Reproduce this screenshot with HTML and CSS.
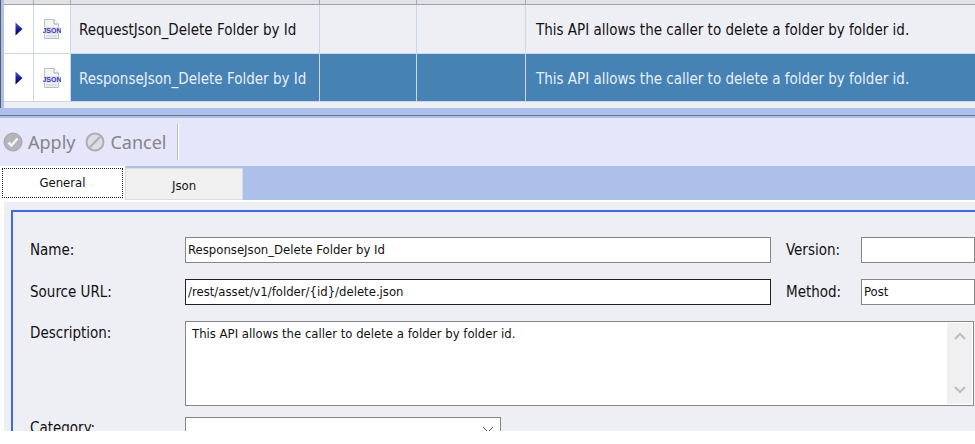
FILE: index.html
```html
<!DOCTYPE html>
<html lang="en">
<head>
  <meta charset="UTF-8">
  <title>Assets</title>
  <link rel="stylesheet" href="styles.css">
</head>
<body>
  <svg width="0" height="0" class="defs" aria-hidden="true">
    <defs>
      <linearGradient id="arrowFill" x1="0" y1="0" x2="0" y2="1">
        <stop offset="0" stop-color="#5a5ad8"/>
        <stop offset="0.5" stop-color="#1c1c9c"/>
        <stop offset="1" stop-color="#00002c"/>
      </linearGradient>
      <symbol id="arrow" viewBox="0 0 8 14">
        <path d="M0.5 0.5 L7.5 7 L0.5 13.5 Z" fill="url(#arrowFill)"/>
      </symbol>
      <symbol id="json" viewBox="0 0 18 20">
        <path d="M1.5 0.5 H11 L15.5 5 V19.5 H1.5 Z" fill="#f3f5f6" stroke="#b9c0c4"/>
        <path d="M11 0.5 V5 H15.5" fill="#fff" stroke="#a4aaae"/>
        <path d="M3 16.5 H14 M3 18 H14" stroke="#d3dadd"/>
        <rect x="1" y="8" width="16" height="7" fill="#dfe1f2"/>
        <text x="9" y="14" font-size="7" font-weight="bold" text-anchor="middle" fill="#3c3ca8" font-family="Liberation Sans, sans-serif">JSON</text>
      </symbol>
    </defs>
  </svg>

  <main class="window">
    <div class="grid-area">
      <table class="assets">
        <colgroup>
          <col class="col-arrow">
          <col class="col-icon">
          <col class="col-name">
          <col class="col-a">
          <col class="col-b">
          <col>
        </colgroup>
        <thead>
          <tr><th></th><th></th><th></th><th></th><th></th><th></th></tr>
        </thead>
        <tbody>
          <tr>
            <td class="mark"><svg class="arrow"><use href="#arrow"/></svg></td>
            <td class="mark"><svg class="json"><use href="#json"/></svg></td>
            <td>RequestJson_Delete Folder by Id</td>
            <td></td>
            <td></td>
            <td>This API allows the caller to delete a folder by folder id.</td>
          </tr>
          <tr class="selected">
            <td class="mark"><svg class="arrow"><use href="#arrow"/></svg></td>
            <td class="mark"><svg class="json"><use href="#json"/></svg></td>
            <td>ResponseJson_Delete Folder by Id</td>
            <td></td>
            <td></td>
            <td>This API allows the caller to delete a folder by folder id.</td>
          </tr>
        </tbody>
      </table>
    </div>
    <div class="splitter"></div>

    <div class="toolbar">
      <button type="button" disabled>
        <svg viewBox="0 0 20 20"><circle cx="10" cy="10" r="9" fill="#b5b5b9" stroke="#a3a3a7"/><path d="M5.5 10.5 L8.5 13.5 L14.5 6.5" fill="none" stroke="#f4f4f8" stroke-width="2.5"/></svg>
        Apply
      </button>
      <button type="button" disabled>
        <svg viewBox="0 0 20 20"><circle cx="10" cy="10" r="8.5" fill="#dcdce4" stroke="#adadb1" stroke-width="2"/><path d="M5 15 L15 5" stroke="#adadb1" stroke-width="2"/></svg>
        Cancel
      </button>
      <span class="divider"></span>
    </div>

    <div class="tabs" role="tablist">
      <button type="button" role="tab" aria-selected="true" class="tab active">General</button>
      <button type="button" role="tab" aria-selected="false" class="tab">Json</button>
    </div>

    <div class="panel">
      <form class="details">
        <div class="row">
          <label for="name">Name:</label>
          <input type="text" id="name" value="ResponseJson_Delete Folder by Id">
          <label for="version">Version:</label>
          <input type="text" id="version">
        </div>
        <div class="row">
          <label for="url">Source URL:</label>
          <input type="text" id="url" class="focused" value="/rest/asset/v1/folder/{id}/delete.json">
          <label for="method">Method:</label>
          <input type="text" id="method" value="Post">
        </div>
        <div class="row description">
          <label for="description">Description:</label>
          <div class="memo">
            <textarea id="description">This API allows the caller to delete a folder by folder id.</textarea>
            <div class="scroll">
              <button type="button" aria-label="Scroll up"><svg viewBox="0 0 12 10"><path d="M1 8 L6 3 L11 8"/></svg></button>
              <button type="button" aria-label="Scroll down"><svg viewBox="0 0 12 10"><path d="M1 2 L6 7 L11 2"/></svg></button>
            </div>
          </div>
        </div>
        <div class="row">
          <label for="category">Category:</label>
          <div class="combo">
            <select id="category"><option></option></select>
            <svg viewBox="0 0 12 8"><path d="M1 1 L6 6 L11 1"/></svg>
          </div>
        </div>
      </form>
    </div>
  </main>
</body>
</html>
```
FILE: styles.css
```css
* {
  box-sizing: border-box;
}

body {
  margin: 0;
  background-color: #fff;
  color: #111;
  font-family: Tahoma, "DejaVu Sans Condensed", "DejaVu Sans", sans-serif;
  font-size: 15px;
  line-height: 18px;
}

button,
input,
textarea,
select {
  font-family: inherit;
  margin: 0;
}

.defs {
  position: absolute;
}

.window {
  display: flex;
  flex-direction: column;
  height: calc(100vh - 13px);
  overflow: hidden;
}

/* asset list */
.grid-area {
  flex: none;
  padding-bottom: 6px;
  border-left: 1px solid #5c5c66;
  background-color: #eeeff5;
  box-shadow: inset 3px 0 #adc0ea;
  padding-left: 3px;
}

.assets {
  width: 100%;
  table-layout: fixed;
  border-collapse: separate;
  border-spacing: 0;
}

.col-arrow { width: 30px; }
.col-icon { width: 37px; }
.col-name { width: 249px; }
.col-a { width: 97px; }
.col-b { width: 109px; }

.assets th {
  height: 5px;
  padding: 0;
  background-color: #e1e2e6;
  border-right: 1px solid #a9abb0;
  border-bottom: 1px solid #a2a4a8;
}

.assets td {
  height: 49px;
  padding: 2px 0 0 8px;
  white-space: nowrap;
  border-right: 1px solid #cdd6e5;
  border-bottom: 1px solid #cdd6e5;
}

.assets th:last-child,
.assets td:last-child {
  border-right: none;
}

.assets td:last-child {
  padding-left: 10px;
}

.assets .selected td {
  height: 48px;
  background-color: #4682b4;
  color: #e8f0f8;
}

.assets td.mark,
.assets .selected td.mark {
  padding: 0;
  background-color: #fff;
  text-align: center;
}

.mark svg {
  display: block;
  margin: 0 auto;
}

.arrow {
  width: 8px;
  height: 14px;
}

.json {
  width: 18px;
  height: 20px;
}

.splitter {
  flex: none;
  height: 10px;
  background: linear-gradient(#adc0ea 7px, #6c7690 7px, #6c7690 8px, #adc0ea 8px);
}

/* toolbar */
.toolbar {
  flex: none;
  display: flex;
  align-items: center;
  gap: 10px;
  height: 48px;
  padding-left: 3px;
  background-color: #e6e6fa;
}

.toolbar button {
  display: flex;
  align-items: center;
  gap: 5px;
  padding: 0;
  border: none;
  background: none;
  color: #858589;
  font-family: "Segoe UI", "Noto Sans", sans-serif;
  font-size: 18px;
}

.toolbar svg {
  width: 20px;
  height: 20px;
}

.divider {
  width: 2px;
  height: 36px;
  background-color: #bdbdc6;
  border-right: 1px solid #fff;
}

/* tabs */
.tabs {
  flex: none;
  display: flex;
  align-items: flex-end;
  height: 36px;
  background-color: #adc0ea;
  border-bottom: 2px solid #fff;
}

.tab {
  width: 118px;
  height: 32px;
  padding: 2px 0 0;
  border: 1px solid #dcdcdc;
  background-color: #f0f0f0;
  color: #111;
  font-size: 13px;
}

.tab.active {
  width: 125px;
  height: 34px;
  padding-bottom: 4px;
  border: 2px solid #fff;
  background-color: #fff;
  outline: 1px dotted #222;
  outline-offset: -3px;
}

/* details form */
.panel {
  flex: 1;
  min-height: 0;
  margin-left: 4px;
  padding: 8px 0 0 7px;
  background-color: #eeeff5;
}

.details {
  padding: 25px 0 0 17px;
  border-top: 2px solid #4169e1;
  border-left: 2px solid #4169e1;
}

.row {
  display: grid;
  grid-template-columns: 155px 586px 90px 1fr;
  align-items: center;
  margin-bottom: 16px;
}

.row label:nth-of-type(2) {
  padding-left: 15px;
}

.row input {
  width: 100%;
  height: 26px;
  padding: 0 2px 2px;
  border: 1px solid #85858a;
  border-radius: 0;
  background-color: #fff;
  color: #111;
  font-size: 13px;
}

.row input.focused {
  border-color: #222;
}

.row.description {
  align-items: start;
  margin-bottom: 11px;
}

.row.description label {
  padding-top: 3px;
}

.memo {
  grid-column: 2 / -1;
  display: flex;
  height: 85px;
  margin-right: 1px;
  border: 1px solid #85858a;
  background-color: #fff;
}

.memo textarea {
  flex: 1;
  padding: 4px 6px;
  border: none;
  resize: none;
  color: #111;
  font-size: 13px;
}

.scroll {
  display: flex;
  flex-direction: column;
  justify-content: space-between;
  width: 25px;
  margin: 1px;
  background-color: #f0f0f0;
}

.scroll button {
  height: 27px;
  padding: 0;
  border: none;
  background: none;
}

.scroll svg {
  width: 12px;
  height: 10px;
  fill: none;
  stroke: #bdbdbd;
  stroke-width: 2;
}

.combo {
  position: relative;
  width: 316px;
}

.combo select {
  display: block;
  width: 100%;
  height: 22px;
  appearance: none;
  border: 1px solid #85858a;
  border-radius: 0;
  background-color: #fff;
}

.combo svg {
  position: absolute;
  top: 9px;
  right: 7px;
  width: 12px;
  height: 8px;
  fill: none;
  stroke: #555;
  pointer-events: none;
}
```
